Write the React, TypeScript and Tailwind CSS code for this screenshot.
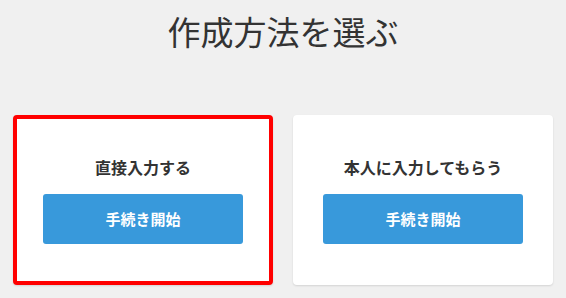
const font = { fontFamily: '"Noto Sans CJK JP", "Noto Sans", sans-serif' };

function MethodCard({ title, selected }: { title: string; selected?: boolean }) {
  return (
    <div
      className={
        "flex h-[170px] w-[260px] flex-col items-center rounded-[4px] bg-white pt-[36px] shadow-[0_1px_2px_rgba(0,0,0,0.12)] " +
        (selected ? "border-[4px] border-[#ff0000]" : "border-[4px] border-white")
      }
    >
      <h2 className="text-[16px] font-bold leading-[24px] text-[#333]">{title}</h2>
      <button className="mt-[15px] h-[50px] w-[200px] rounded-[3px] bg-[#3899db] text-[15px] font-bold text-white">
        手続き開始
      </button>
    </div>
  );
}

export default function App() {
  return (
    <div className="h-[298px] w-full bg-[#f0f0f0]" style={font}>
      <h1 className="pt-[7px] text-center text-[33px] font-normal leading-[49px] text-[#333]">
        作成方法を選ぶ
      </h1>
      <div className="mt-[59px] flex justify-center gap-5">
        <MethodCard title="直接入力する" selected />
        <MethodCard title="本人に入力してもらう" />
      </div>
    </div>
  );
}
